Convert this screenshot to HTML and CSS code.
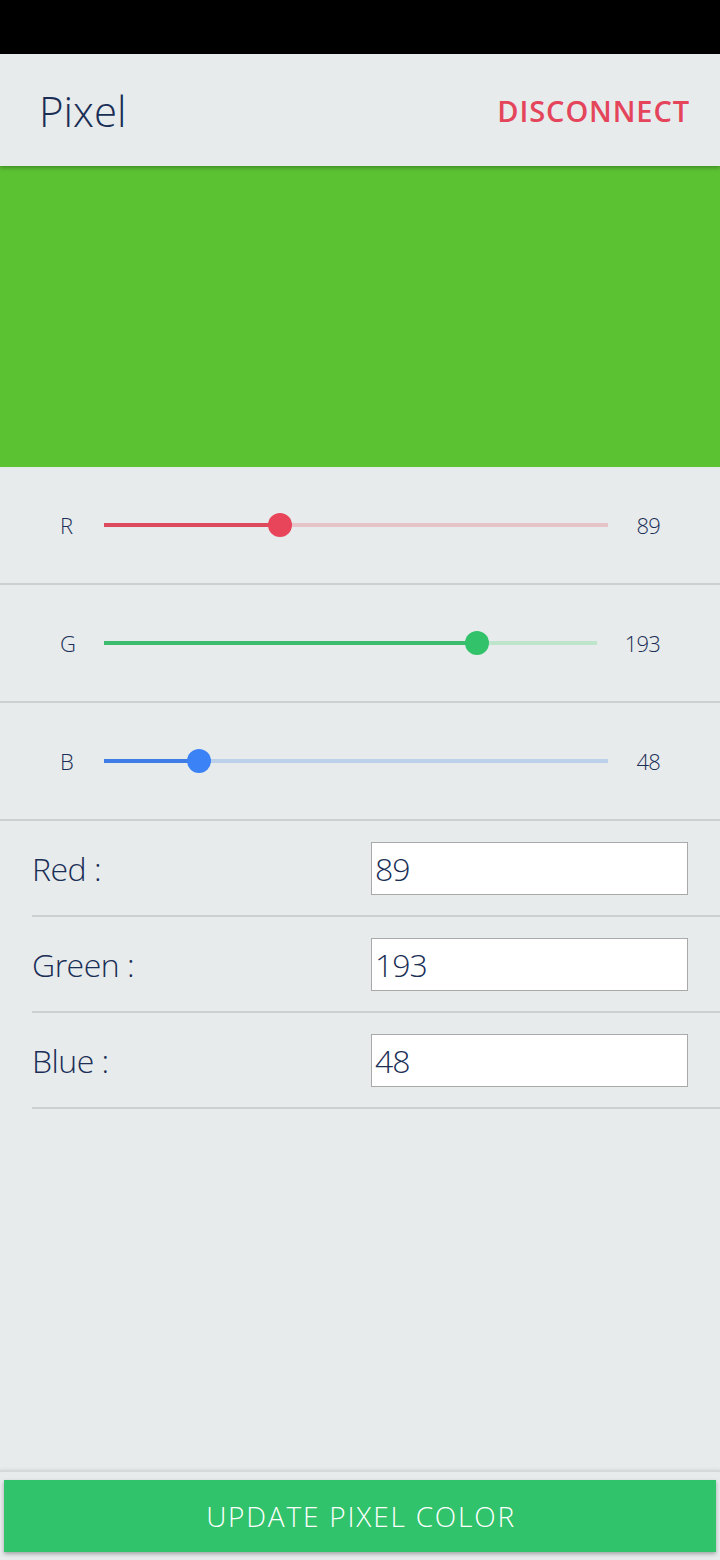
FILE: index.html
```html
<!DOCTYPE html>
<html>
<head>
<meta charset="utf-8">
<link rel="stylesheet" href="styles.css">
</head>
<body>
<div class="app">
  <div class="statusbar"></div>
  <header class="header">
    <div class="title">Pixel</div>
    <div class="disconnect">DISCONNECT</div>
  </header>
  <div class="preview"></div>
  <div class="sliders">
    <div class="slider-row red">
      <div class="s-label">R</div>
      <div class="track"><div class="fill" style="width:34.9%"></div><div class="thumb" style="left:34.9%"></div></div>
      <div class="s-value">89</div>
    </div>
    <div class="slider-row green">
      <div class="s-label">G</div>
      <div class="track"><div class="fill" style="width:75.7%"></div><div class="thumb" style="left:75.7%"></div></div>
      <div class="s-value">193</div>
    </div>
    <div class="slider-row blue">
      <div class="s-label">B</div>
      <div class="track"><div class="fill" style="width:18.8%"></div><div class="thumb" style="left:18.8%"></div></div>
      <div class="s-value">48</div>
    </div>
  </div>
  <div class="fields">
    <div class="field-row">
      <div class="f-label">Red :</div>
      <input class="f-input" type="text" value="89">
    </div>
    <div class="field-row">
      <div class="f-label">Green :</div>
      <input class="f-input" type="text" value="193">
    </div>
    <div class="field-row">
      <div class="f-label">Blue :</div>
      <input class="f-input" type="text" value="48">
    </div>
  </div>
  <div class="spacer"></div>
  <footer class="footer">
    <button class="update-btn">UPDATE PIXEL COLOR</button>
  </footer>
</div>
</body>
</html>
```
FILE: styles.css
```css
* { box-sizing: border-box; }
html, body { margin: 0; padding: 0; }
body {
  background: #e7ebec;
  font-family: "Open Sans", "Noto Sans", sans-serif;
  color: #1a2e56;
}
.app {
  width: 720px;
  height: 1560px;
  display: flex;
  flex-direction: column;
  background: #e7ebec;
}
.statusbar {
  height: 54px;
  background: #000;
  flex: none;
}
.header {
  height: 112px;
  flex: none;
  display: flex;
  align-items: center;
  justify-content: space-between;
  padding: 0 30px 0 39px;
  background: #e7ebec;
  position: relative;
  z-index: 2;
  box-shadow: 0 2px 4px rgba(0,0,0,0.28);
}
.title {
  font-size: 42px;
  font-weight: 300;
  color: #1a2e56;
  letter-spacing: 0;
}
.disconnect {
  font-size: 29px;
  font-weight: 600;
  color: #e4455b;
  letter-spacing: 0.9px;
}
.preview {
  height: 301px;
  flex: none;
  background: #5bc232;
}
.slider-row {
  height: 118px;
  display: flex;
  align-items: center;
  padding: 0 60px 0 60px;
  border-bottom: 2px solid #cdd0d1;
}
.s-label {
  width: 44px;
  font-size: 22px;
  font-weight: 300;
  flex: none;
}
.track {
  flex: 1;
  height: 4px;
  position: relative;
  margin-right: 28px;
}
.fill {
  height: 4px;
}
.thumb {
  position: absolute;
  top: 50%;
  width: 24px;
  height: 24px;
  border-radius: 50%;
  transform: translate(-50%, -50%);
}
.s-value {
  font-size: 22px;
  font-weight: 300;
  flex: none;
  letter-spacing: -0.8px;
}
.red .track { background: #e6c3c8; }
.red .fill { background: #de4a5d; }
.red .thumb { background: #e8455b; }
.green .track { background: #bfe4cc; }
.green .fill { background: #3dbb6e; }
.green .thumb { background: #31c26a; }
.blue .track { background: #bdd0ea; }
.blue .fill { background: #3e7de6; }
.blue .thumb { background: #3b82f6; }
.fields {
  padding-left: 32px;
}
.field-row {
  height: 96px;
  display: flex;
  align-items: center;
  justify-content: space-between;
  padding-right: 32px;
  border-bottom: 2px solid #cdd0d1;
}
.f-label {
  font-size: 32px;
  font-weight: 300;
  letter-spacing: -0.5px;
}
.f-input {
  width: 317px;
  height: 53px;
  border: 1px solid #a9a9a9;
  background: #fff;
  font-family: "Open Sans", "Noto Sans", sans-serif;
  font-size: 32px;
  font-weight: 300;
  color: #1a2e56;
  padding: 0 3px;
  margin: 0;
  outline: none;
  letter-spacing: -1px;
}
.spacer { flex: 1; }
.footer {
  flex: none;
  border-top: 2px solid #d6d9da;
  box-shadow: 0 -1px 3px rgba(0,0,0,0.06);
  padding: 8px 4px 8px 4px;
}
.update-btn {
  display: block;
  width: 100%;
  height: 72px;
  border: none;
  background: #30c36b;
  color: #fff;
  font-family: "Open Sans", "Noto Sans", sans-serif;
  font-size: 28px;
  font-weight: 300;
  letter-spacing: 1.8px;
  box-shadow: 0 2px 4px rgba(0,0,0,0.3);
  padding: 0 0 0 2px;
}
```
